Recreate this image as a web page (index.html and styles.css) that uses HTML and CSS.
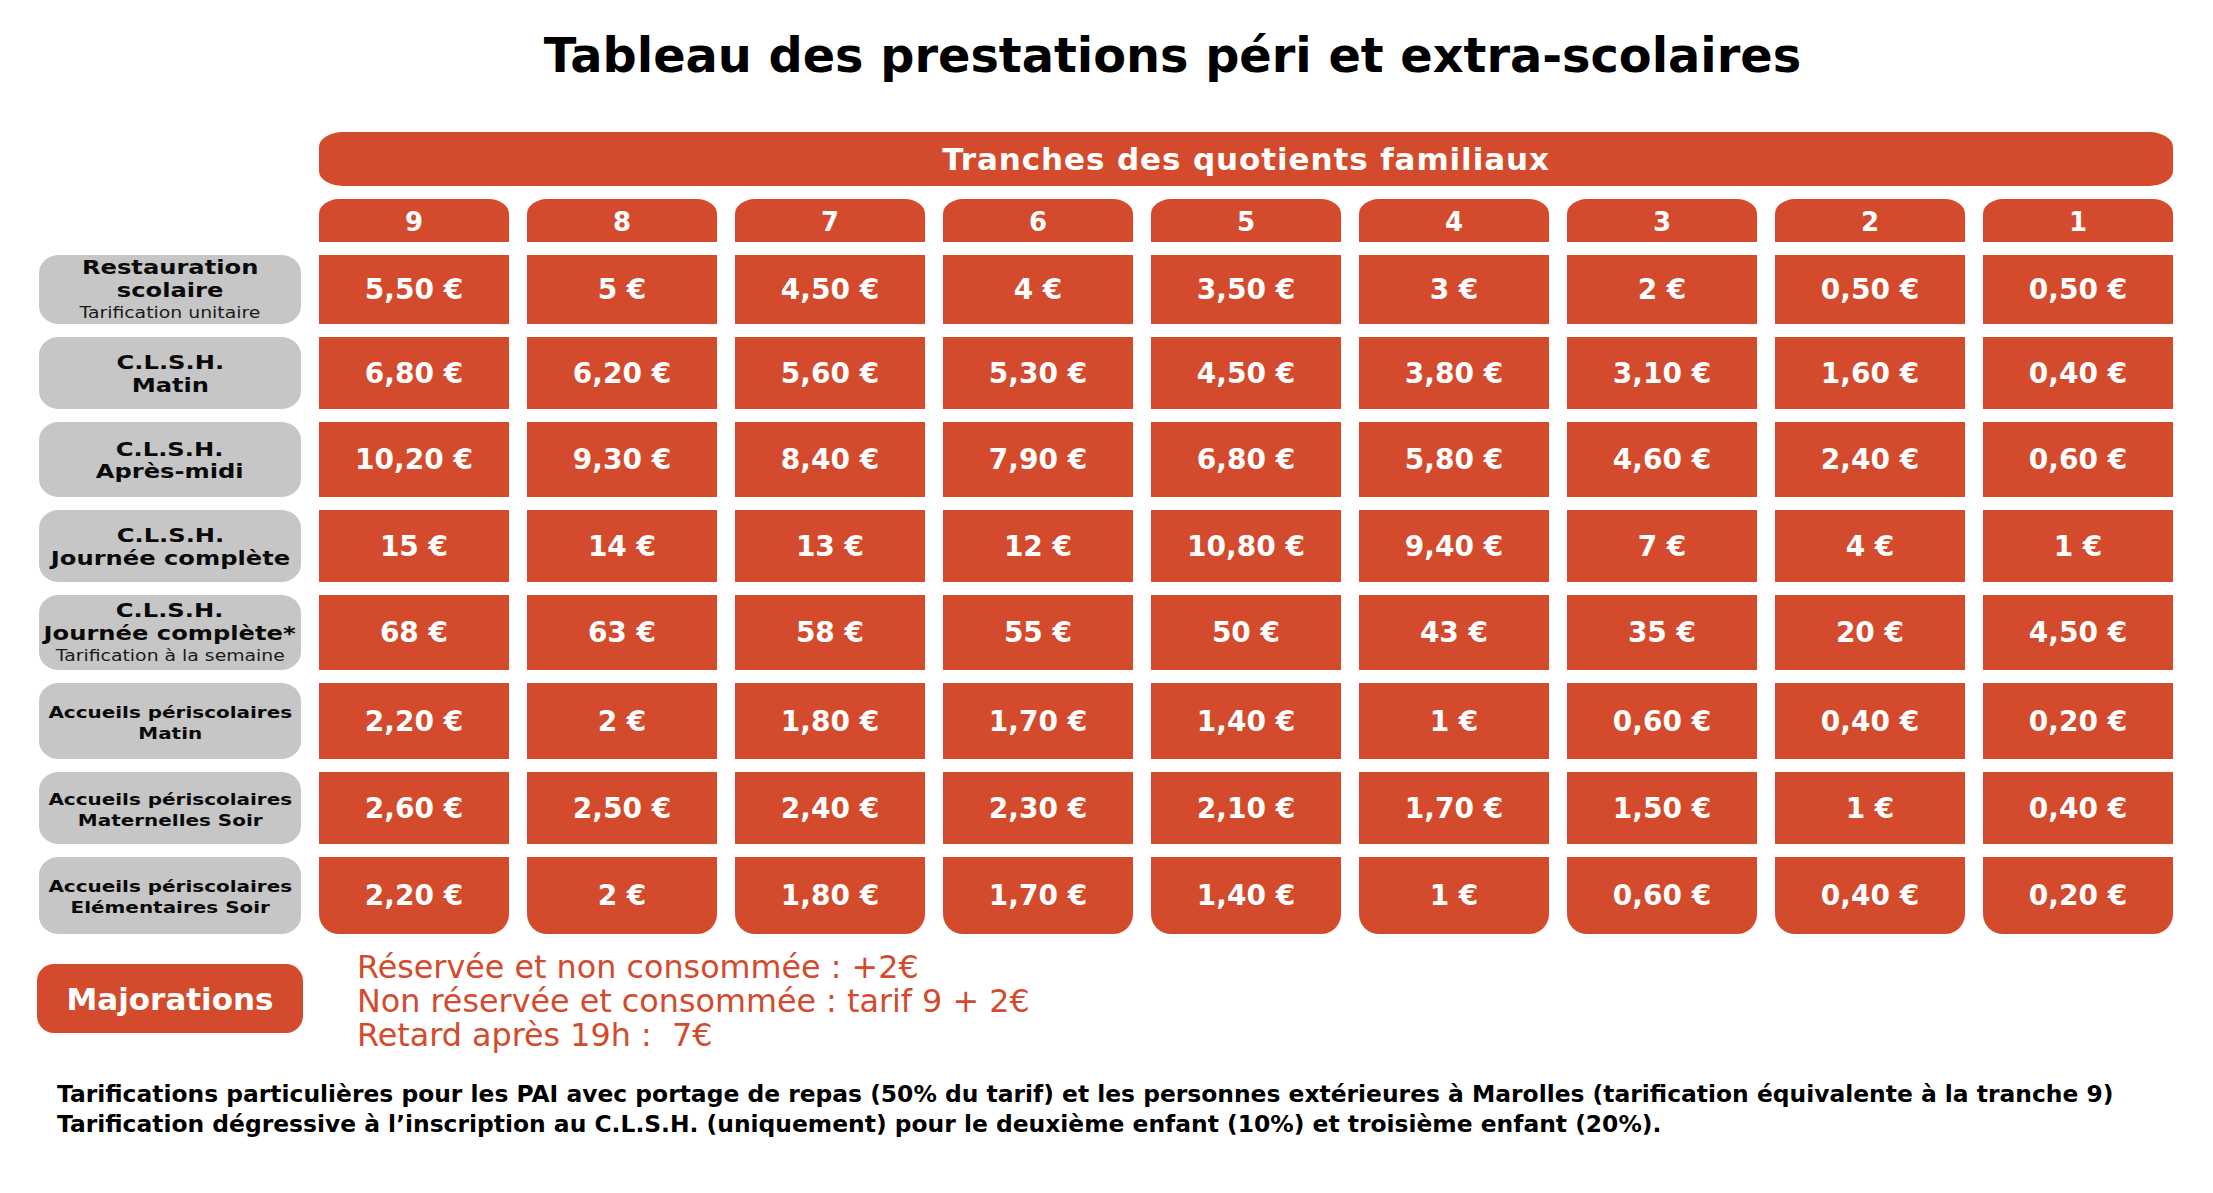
FILE: index.html
```html
<!DOCTYPE html>
<html lang="fr">
<head>
<meta charset="utf-8">
<title>Tableau des prestations péri et extra-scolaires</title>
<link rel="stylesheet" href="styles.css">
</head>
<body>
<main class="sheet">
  <h1 class="title">Tableau des prestations péri et extra-scolaires</h1>

  <div class="grid">
    <div class="spacer"></div>
    <div class="band">Tranches des quotients familiaux</div>

    <div class="spacer"></div>
    <div class="tab">9</div><div class="tab">8</div><div class="tab">7</div><div class="tab">6</div><div class="tab">5</div><div class="tab">4</div><div class="tab">3</div><div class="tab">2</div><div class="tab">1</div>

    <div class="label"><span class="main">Restauration<br>scolaire</span><span class="sub">Tarification unitaire</span></div>
    <div class="cell">5,50&nbsp;€</div><div class="cell">5&nbsp;€</div><div class="cell">4,50&nbsp;€</div><div class="cell">4&nbsp;€</div><div class="cell">3,50&nbsp;€</div><div class="cell">3&nbsp;€</div><div class="cell">2&nbsp;€</div><div class="cell">0,50&nbsp;€</div><div class="cell">0,50&nbsp;€</div>

    <div class="label"><span class="main">C.L.S.H.<br>Matin</span></div>
    <div class="cell">6,80&nbsp;€</div><div class="cell">6,20&nbsp;€</div><div class="cell">5,60&nbsp;€</div><div class="cell">5,30&nbsp;€</div><div class="cell">4,50&nbsp;€</div><div class="cell">3,80&nbsp;€</div><div class="cell">3,10&nbsp;€</div><div class="cell">1,60&nbsp;€</div><div class="cell">0,40&nbsp;€</div>

    <div class="label"><span class="main">C.L.S.H.<br>Après-midi</span></div>
    <div class="cell">10,20&nbsp;€</div><div class="cell">9,30&nbsp;€</div><div class="cell">8,40&nbsp;€</div><div class="cell">7,90&nbsp;€</div><div class="cell">6,80&nbsp;€</div><div class="cell">5,80&nbsp;€</div><div class="cell">4,60&nbsp;€</div><div class="cell">2,40&nbsp;€</div><div class="cell">0,60&nbsp;€</div>

    <div class="label"><span class="main">C.L.S.H.<br>Journée complète</span></div>
    <div class="cell">15&nbsp;€</div><div class="cell">14&nbsp;€</div><div class="cell">13&nbsp;€</div><div class="cell">12&nbsp;€</div><div class="cell">10,80&nbsp;€</div><div class="cell">9,40&nbsp;€</div><div class="cell">7&nbsp;€</div><div class="cell">4&nbsp;€</div><div class="cell">1&nbsp;€</div>

    <div class="label"><span class="main">C.L.S.H.<br>Journée complète*</span><span class="sub">Tarification à la semaine</span></div>
    <div class="cell">68&nbsp;€</div><div class="cell">63&nbsp;€</div><div class="cell">58&nbsp;€</div><div class="cell">55&nbsp;€</div><div class="cell">50&nbsp;€</div><div class="cell">43&nbsp;€</div><div class="cell">35&nbsp;€</div><div class="cell">20&nbsp;€</div><div class="cell">4,50&nbsp;€</div>

    <div class="label label-small"><span class="main">Accueils périscolaires<br>Matin</span></div>
    <div class="cell">2,20&nbsp;€</div><div class="cell">2&nbsp;€</div><div class="cell">1,80&nbsp;€</div><div class="cell">1,70&nbsp;€</div><div class="cell">1,40&nbsp;€</div><div class="cell">1&nbsp;€</div><div class="cell">0,60&nbsp;€</div><div class="cell">0,40&nbsp;€</div><div class="cell">0,20&nbsp;€</div>

    <div class="label label-small"><span class="main">Accueils périscolaires<br>Maternelles Soir</span></div>
    <div class="cell">2,60&nbsp;€</div><div class="cell">2,50&nbsp;€</div><div class="cell">2,40&nbsp;€</div><div class="cell">2,30&nbsp;€</div><div class="cell">2,10&nbsp;€</div><div class="cell">1,70&nbsp;€</div><div class="cell">1,50&nbsp;€</div><div class="cell">1&nbsp;€</div><div class="cell">0,40&nbsp;€</div>

    <div class="label label-small"><span class="main">Accueils périscolaires<br>Elémentaires Soir</span></div>
    <div class="cell cell-end">2,20&nbsp;€</div><div class="cell cell-end">2&nbsp;€</div><div class="cell cell-end">1,80&nbsp;€</div><div class="cell cell-end">1,70&nbsp;€</div><div class="cell cell-end">1,40&nbsp;€</div><div class="cell cell-end">1&nbsp;€</div><div class="cell cell-end">0,60&nbsp;€</div><div class="cell cell-end">0,40&nbsp;€</div><div class="cell cell-end">0,20&nbsp;€</div>
  </div>

  <section class="extra">
    <div class="badge">Majorations</div>
    <div class="extra-list">
      <div>Réservée et non consommée : +2€</div>
      <div>Non réservée et consommée : tarif 9 + 2€</div>
      <div>Retard après 19h :&nbsp; 7€</div>
    </div>
  </section>

  <div class="notes">
    <div>Tarifications particulières pour les PAI avec portage de repas (50% du tarif) et les personnes extérieures à Marolles (tarification équivalente à la tranche 9)</div>
    <div>Tarification dégressive à l’inscription au C.L.S.H. (uniquement) pour le deuxième enfant (10%) et troisième enfant (20%).</div>
  </div>
</main>
</body>
</html>
```

FILE: styles.css
```css
html, body {
  margin: 0;
  background: #ffffff;
}

body {
  font-family: "DejaVu Sans", "Liberation Sans", sans-serif;
  color: #000000;
}

.sheet {
  padding: 28px 0 0 39px;
}

.title {
  margin: 0;
  padding-left: 93px;
  text-align: center;
  font-size: 47.8px;
  line-height: 56px;
  font-weight: 700;
}

.grid {
  margin-top: 48px;
  display: grid;
  grid-template-columns: 262px repeat(9, 190px);
  grid-template-rows: 54px 43px 69px 72px 75px 72px 75px 76px 72px 77px;
  column-gap: 18px;
  row-gap: 13px;
}

.band {
  grid-column: 2 / -1;
  background: #d34b2c;
  color: #ffffff;
  border-radius: 24px / 15px;
  display: flex;
  align-items: center;
  justify-content: center;
  font-size: 31px;
  letter-spacing: 0.9px;
  font-weight: 700;
}

.tab {
  background: #d34b2c;
  color: #ffffff;
  border-radius: 20px 20px 0 0 / 15px 15px 0 0;
  display: flex;
  align-items: center;
  justify-content: center;
  padding-top: 2px;
  font-size: 26px;
  font-weight: 700;
}

.cell {
  background: #d34b2c;
  color: #ffffff;
  display: flex;
  align-items: center;
  justify-content: center;
  font-size: 28px;
  font-weight: 700;
}

.cell-end {
  border-radius: 0 0 20px 20px;
}

.label {
  background: #c6c6c6;
  border-radius: 20px / 18px;
  display: flex;
  flex-direction: column;
  align-items: center;
  justify-content: center;
  padding-top: 3px;
  text-align: center;
  font-size: 19.5px;
  line-height: 22.5px;
  font-weight: 700;
  color: #0a0a0a;
}

.label .main,
.label .sub {
  display: block;
  white-space: nowrap;
  transform: scaleX(1.24);
}

.label-small {
  font-size: 16.1px;
  line-height: 21px;
}

.label .sub {
  font-size: 15.2px;
  font-weight: 400;
  color: #1a1a1a;
}

.extra {
  margin-top: 16px;
  display: flex;
  align-items: flex-start;
}

.badge {
  width: 266px;
  height: 69px;
  margin-top: 14px;
  margin-left: -2px;
  background: #d34b2c;
  border-radius: 17px;
  color: #ffffff;
  display: flex;
  align-items: center;
  justify-content: center;
  font-size: 31px;
  font-weight: 700;
}

.extra-list {
  margin-left: 54px;
  color: #d34b2c;
  font-size: 31.8px;
  line-height: 34px;
}

.notes {
  margin: 27px 0 0 18px;
  font-size: 23.4px;
  line-height: 30px;
  font-weight: 700;
}
```
